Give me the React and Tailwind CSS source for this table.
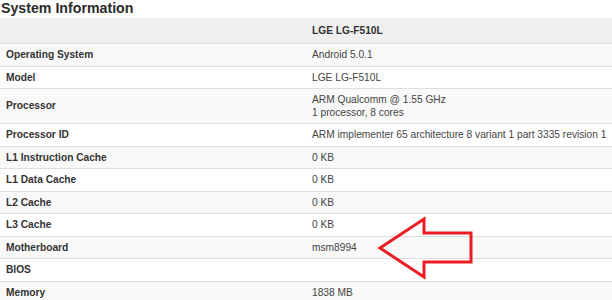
const rows = [
  { label: 'Operating System', value: ['Android 5.0.1'] },
  { label: 'Model', value: ['LGE LG-F510L'] },
  { label: 'Processor', value: ['ARM Qualcomm @ 1.55 GHz', '1 processor, 8 cores'], tall: true },
  { label: 'Processor ID', value: ['ARM implementer 65 architecture 8 variant 1 part 3335 revision 1'] },
  { label: 'L1 Instruction Cache', value: ['0 KB'] },
  { label: 'L1 Data Cache', value: ['0 KB'] },
  { label: 'L2 Cache', value: ['0 KB'] },
  { label: 'L3 Cache', value: ['0 KB'] },
  { label: 'Motherboard', value: ['msm8994'] },
  { label: 'BIOS', value: [] },
  { label: 'Memory', value: ['1838 MB'] },
]

export default function App() {
  return (
    <div className="relative w-[612px] h-[300px] overflow-hidden bg-white font-['Liberation_Sans',Arial,sans-serif]">
      <h1 className="h-[18px] pl-[1px] text-[14.2px] leading-[16px] font-bold text-[#2b2b2b]">System Information</h1>

      <div className="text-[10.2px]">
        <div className="flex h-[25px] items-center bg-[#efefef]">
          <div className="w-1/2" />
          <div className="w-1/2 pl-[6px] font-bold text-[#333]">LGE LG-F510L</div>
        </div>
        {rows.map((r, i) => (
          <div
            key={r.label}
            className={`flex items-center border-t border-[#dedede] ${r.tall ? 'h-[35px]' : 'h-[22.5px]'} ${i % 2 === 0 ? 'bg-[#f9f9f9]' : 'bg-white'}`}
          >
            <div className="w-1/2 pl-[6px] font-bold text-[#333]">{r.label}</div>
            <div className="w-1/2 pl-[6px] text-[#444] leading-[13px]">
              {r.value.map(v => <div key={v}>{v}</div>)}
            </div>
          </div>
        ))}
      </div>

      {/* red arrow pointing at the motherboard value */}
      <svg className="absolute left-0 top-0" width="612" height="300" viewBox="0 0 612 300">
        <path
          d="M380 248 L424 219 L424 233 L471 233 L471 262 L424 262 L424 277 Z"
          fill="none"
          stroke="#ec1c24"
          strokeWidth="3"
          strokeLinejoin="miter"
        />
      </svg>
    </div>
  )
}
